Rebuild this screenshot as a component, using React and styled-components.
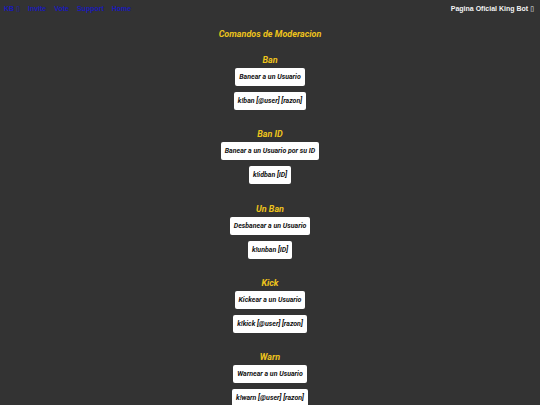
import React from 'react';
import styled, { createGlobalStyle } from 'styled-components';

const GlobalStyle = createGlobalStyle`
  html, body {
    margin: 0;
    padding: 0;
    background: #333333;
  }
  body {
    font-family: "Liberation Sans", Arial, sans-serif;
  }
`;

const Nav = styled.nav`
  display: flex;
  justify-content: space-between;
  align-items: center;
  height: 18px;
  padding: 0 6px 0 4px;
  font-size: 7px;
  font-weight: 700;
`;

const NavLinks = styled.div`
  display: flex;
  gap: 8px;
`;

const NavLink = styled.a`
  color: #1a1ab8;
  text-decoration: none;
`;

const Brand = styled.span`
  color: #f2f2f2;
`;

const Glyph = styled.span`
  font-family: "DejaVu Sans", sans-serif;
  font-weight: 400;
  margin-left: 2px;
`;

const Main = styled.main`
  display: flex;
  flex-direction: column;
  align-items: center;
  padding-top: 10px;
  font-family: Roboto, "Liberation Sans", sans-serif;
  font-style: italic;
`;

const Title = styled.h1`
  margin: 0 0 14px;
  font-size: 9px;
  line-height: 12px;
  font-weight: 700;
  color: #eec41c;
`;

const Section = styled.section`
  display: flex;
  flex-direction: column;
  align-items: center;
  gap: 6px;
  margin-bottom: 18.3px;
`;

const Heading = styled.h2`
  margin: 0 0 -4px;
  font-size: 9px;
  line-height: 12px;
  font-weight: 700;
  color: #eec41c;
`;

const Box = styled.div`
  background: #ffffff;
  color: #111111;
  height: 18px;
  line-height: 18px;
  padding: 0 4px;
  border-radius: 2px;
  font-size: 7px;
  font-weight: 700;
`;

const commands = [
  { name: 'Ban', desc: 'Banear a un Usuario', usage: 'k!ban [@user] [razon]' },
  { name: 'Ban ID', desc: 'Banear a un Usuario por su ID', usage: 'k!idban [ID]' },
  { name: 'Un Ban', desc: 'Desbanear a un Usuario', usage: 'k!unban [ID]' },
  { name: 'Kick', desc: 'Kickear a un Usuario', usage: 'k!kick [@user] [razon]' },
  { name: 'Warn', desc: 'Warnear a un Usuario', usage: 'k!warn [@user] [razon]' },
];

export default function App() {
  return (
    <>
      <GlobalStyle />
      <Nav>
        <NavLinks>
          <NavLink href="#">KB<Glyph>▯</Glyph></NavLink>
          <NavLink href="#">Invite</NavLink>
          <NavLink href="#">Vote</NavLink>
          <NavLink href="#">Support</NavLink>
          <NavLink href="#">Home</NavLink>
        </NavLinks>
        <Brand>Pagina Oficial King Bot<Glyph>▯</Glyph></Brand>
      </Nav>
      <Main>
        <Title>Comandos de Moderacion</Title>
        {commands.map((c) => (
          <Section key={c.name}>
            <Heading>{c.name}</Heading>
            <Box>{c.desc}</Box>
            <Box>{c.usage}</Box>
          </Section>
        ))}
      </Main>
    </>
  );
}
